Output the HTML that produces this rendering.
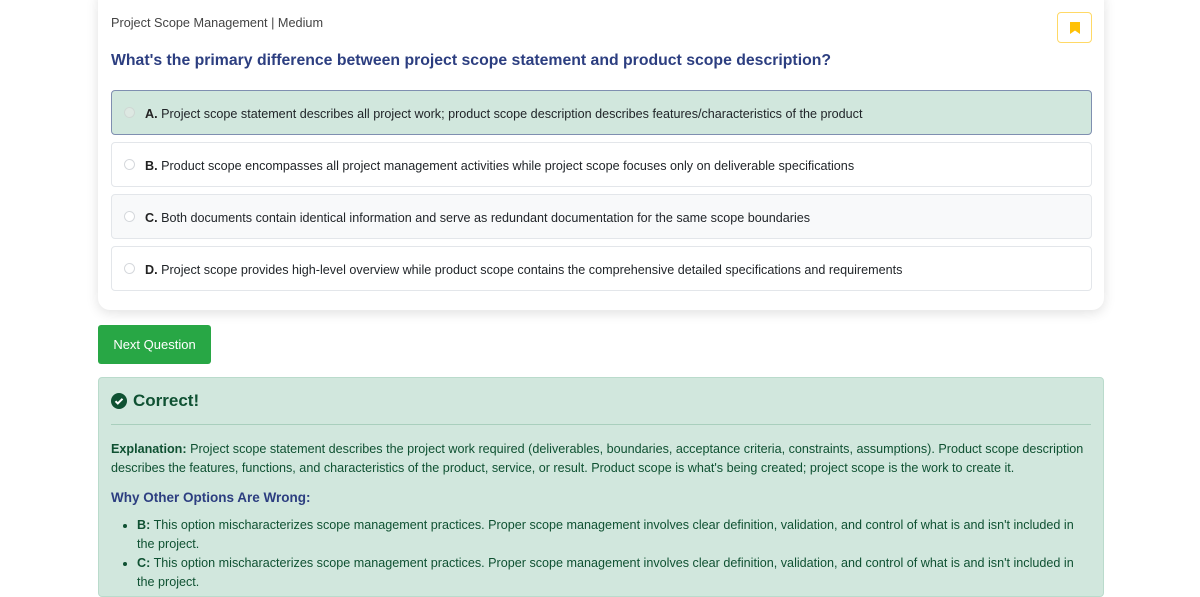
<!DOCTYPE html>
<html><head><meta charset="utf-8"><style>
*{box-sizing:border-box;margin:0;padding:0}
body{width:1200px;height:575px;overflow:hidden;background:#fff;font-family:"Liberation Sans",Arial,sans-serif;font-size:12.6px;color:#212529;position:relative}
.card{position:absolute;left:98px;top:-12px;width:1006px;height:322px;background:#fff;border-radius:12px;box-shadow:0 3px 12px rgba(0,0,0,.12)}
.meta{position:absolute;left:111px;top:16px;color:#444;font-size:12.7px}
.bm{position:absolute;left:1057px;top:12px;width:35px;height:31px;border:1px solid #ffd966;border-radius:4px;background:#fff}
.bm svg{position:absolute;left:12px;top:9px}
.q{position:absolute;left:111px;top:52px;font-size:15.8px;font-weight:bold;color:#2c3e80;white-space:nowrap}
.opt{position:absolute;left:111px;width:981px;height:45px;border:1px solid #e3e6ea;border-radius:4px;background:#fff;white-space:nowrap}
.opt .r{position:absolute;left:12px;top:16px;width:11px;height:11px;border:1px solid #d5d8dc;border-radius:50%;background:#fff}
.opt .t{position:absolute;left:33px;top:15px;line-height:17px}
.opt b{color:#222}
.sel{background:#d1e7dd;border-color:#7f8fb0}
.sel .r{background:#dde8e2;border-color:#cfd8d4}
.gray{background:#f8f9fa}
.btn{position:absolute;left:98px;top:325px;width:113px;height:39px;background:#28a745;border-radius:3px;color:#fff;font-size:13px;line-height:39px;text-align:center}
.alert{position:absolute;left:98px;top:377px;width:1006px;height:220px;background:#d1e7dd;border:1px solid #badbcc;border-radius:4px;color:#0f5132}
.hd{position:absolute;left:12px;top:13px;font-size:17px;font-weight:bold;white-space:nowrap}
.hd svg{vertical-align:-3px;margin-right:6px}
.hr{position:absolute;left:12px;right:12px;top:46px;border-top:1px solid #a9cfbd}
.ex{position:absolute;left:12px;top:62px;line-height:19px;white-space:nowrap}
.why{position:absolute;left:12px;top:112px;font-weight:bold;color:#2c3e80;font-size:13.5px}
ul{position:absolute;left:38px;top:138px;line-height:19px;white-space:nowrap}
</style></head><body>
<div class="card"></div>
<div class="meta">Project Scope Management | Medium</div>
<div class="bm"><svg width="10" height="12" viewBox="0 0 10 12"><path d="M0 0H10V12L5 8.5 0 12Z" fill="#ffc107"/></svg></div>
<div class="q">What's the primary difference between project scope statement and product scope description?</div>
<div class="opt sel" style="top:90px"><span class="r"></span><span class="t"><b>A.</b> Project scope statement describes all project work; product scope description describes features/characteristics of the product</span></div>
<div class="opt" style="top:142px"><span class="r"></span><span class="t"><b>B.</b> Product scope encompasses all project management activities while project scope focuses only on deliverable specifications</span></div>
<div class="opt gray" style="top:194px"><span class="r"></span><span class="t"><b>C.</b> Both documents contain identical information and serve as redundant documentation for the same scope boundaries</span></div>
<div class="opt" style="top:246px"><span class="r"></span><span class="t"><b>D.</b> Project scope provides high-level overview while product scope contains the comprehensive detailed specifications and requirements</span></div>
<div class="btn">Next Question</div>
<div class="alert">
<div class="hd"><svg width="16" height="16" viewBox="0 0 16 16"><circle cx="8" cy="8" r="8" fill="#0f5132"/><path d="M4.5 8.2l2.3 2.3 4.7-4.7" stroke="#fff" stroke-width="2" fill="none"/></svg>Correct!</div>
<div class="hr"></div>
<div class="ex"><b>Explanation:</b> Project scope statement describes the project work required (deliverables, boundaries, acceptance criteria, constraints, assumptions). Product scope description<br>describes the features, functions, and characteristics of the product, service, or result. Product scope is what's being created; project scope is the work to create it.</div>
<div class="why">Why Other Options Are Wrong:</div>
<ul>
<li><b>B:</b> This option mischaracterizes scope management practices. Proper scope management involves clear definition, validation, and control of what is and isn't included in<br>the project.</li>
<li><b>C:</b> This option mischaracterizes scope management practices. Proper scope management involves clear definition, validation, and control of what is and isn't included in<br>the project.</li>
</ul>
</div>
</body></html>
